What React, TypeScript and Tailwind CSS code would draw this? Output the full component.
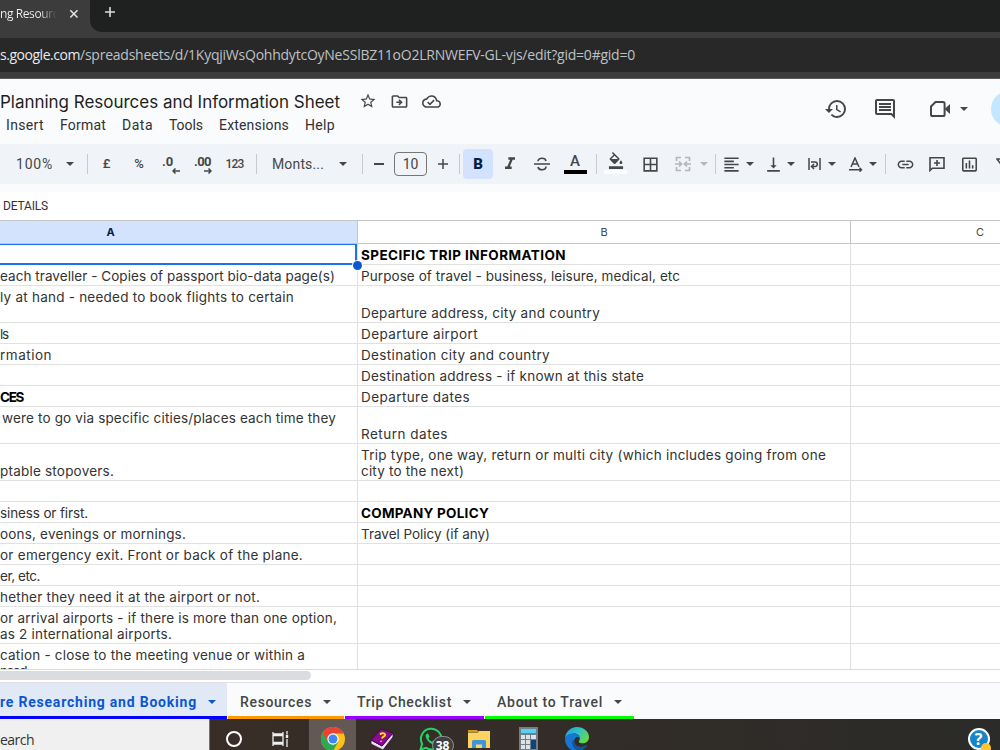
import { useLayoutEffect, useRef, type ReactNode } from "react";
import {
  MdBorderAll,
  MdFormatAlignLeft,
  MdFormatColorFill,
  MdFormatItalic,
  MdHistory,
  MdInsertChartOutlined,
  MdLink,
  MdOutlineCloudDone,
  MdOutlineDriveFileMove,
  MdOutlineInsertComment,
  MdStarBorder,
  MdVerticalAlignBottom,
} from "react-icons/md";
import clsx from "clsx";

interface FitProps {
  w: number;
  className?: string;
  children: ReactNode;
}

// Tracks the text out (or in) until it is exactly w pixels wide
function Fit({ w, className, children }: FitProps) {
  const ref = useRef<HTMLSpanElement>(null);

  useLayoutEffect(() => {
    const el = ref.current;
    if (!el) return;
    el.style.letterSpacing = "0px";
    const natural = el.getBoundingClientRect().width;
    const count = el.textContent?.length ?? 1;
    el.style.letterSpacing = `${(w - natural) / count}px`;
  }, [w]);

  return (
    <span ref={ref} className={clsx("inline-block shrink-0 whitespace-pre", className)}>
      {children}
    </span>
  );
}

function Slot({ className, children }: { className: string; children?: ReactNode }) {
  return <div className={clsx("flex shrink-0 items-center justify-center", className)}>{children}</div>;
}

function Caret({ className = "text-[#444746]" }: { className?: string }) {
  return (
    <svg className={clsx("h-1 w-2 shrink-0", className)} viewBox="0 0 8 4" fill="currentColor">
      <path d="M0 0h8L4 4z" />
    </svg>
  );
}

function Divider() {
  return <div className="h-5 w-px shrink-0 bg-[#c7cbd0]" />;
}

// ---- Browser chrome ----

function TabStrip() {
  return (
    <div className="flex h-8 bg-[#1f2120] font-['Open_Sans',sans-serif] text-[#dfe1e5]">
      <div className="-mt-2 flex h-10 w-[90px] shrink-0 items-center rounded-tr-lg bg-[#3c3c3c] pt-1">
        <div className="w-[57px] overflow-hidden bg-linear-to-r from-[#f1f3f4] from-70% to-[#3c3c3c] bg-clip-text text-xs text-transparent">
          <Fit w={58}>ng Resourc</Fit>
        </div>
        <svg className="ml-3 size-2.5" viewBox="0 0 10 10" stroke="#e0e0e0" strokeWidth="1.6">
          <path d="M1.3 1.3l7.2 7.2M8.5 1.3L1.3 8.5" />
        </svg>
      </div>
      <div className="size-3 self-end bg-[#3c3c3c]">
        <div className="size-3 rounded-bl-xl bg-[#1f2120]" />
      </div>
      <svg className="mt-1.5 ml-[2px] size-3" viewBox="0 0 12 12" stroke="#dcdcdc" strokeWidth="1.6">
        <path d="M6 1v10M1 6h10" />
      </svg>
    </div>
  );
}

function AddressBar() {
  return (
    <div className="h-[47px] border-b border-[#5a5a5a] bg-[#3c3c3c] pt-1.5">
      <div className="flex h-[34px] items-center bg-[#282828] pb-0.5 font-['Open_Sans',sans-serif] text-[14px] text-[#bdc1c6]">
        <Fit w={80} className="text-[#e8eaed]">s.google.com</Fit>
        <Fit w={555}>/spreadsheets/d/1KyqjiWsQohhdytcOyNeSSlBZ11oO2LRNWEFV-GL-vjs/edit?gid=0#gid=0</Fit>
      </div>
    </div>
  );
}

// ---- Document header ----

const MENUS = [
  { label: "Insert", w: 38 },
  { label: "Format", w: 46 },
  { label: "Data", w: 31 },
  { label: "Tools", w: 34 },
  { label: "Extensions", w: 70 },
  { label: "Help", w: 30 },
];

function DocHeader() {
  return (
    <header className="flex h-[65px] justify-between bg-[#f9fbfd] text-[#444746]">
      <div>
        <div className="mt-3 flex h-[22px] items-center pt-px">
          <Fit w={340} className="font-[Inter,sans-serif] text-[17px] text-[#1f1f1f]">
            Planning Resources and Information Sheet
          </Fit>
          <MdStarBorder className="mb-[3px] ml-[19px] size-[18px]" />
          <MdOutlineDriveFileMove className="mb-[3px] ml-[13px] size-[19px]" />
          <MdOutlineCloudDone className="mb-[3px] ml-[13px] size-[19px]" />
        </div>
        <nav className="mt-0.5 flex gap-4 pl-1.5 font-[Roboto,sans-serif] text-[14px] leading-5 text-[#303134]">
          {MENUS.map((m) => (
            <Fit key={m.label} w={m.w}>
              {m.label}
            </Fit>
          ))}
        </nav>
      </div>
      <div className="flex w-[176px] shrink-0 items-center overflow-hidden pb-1.5">
        <MdHistory className="size-6 shrink-0" />
        <MdOutlineInsertComment className="ml-[25px] size-6 shrink-0" />
        <svg className="ml-[32px] h-[18px] w-[22px] shrink-0" viewBox="0 0 22 18" fill="none" stroke="#444746" strokeWidth="2">
          <path d="M6.5 2H14a1.6 1.6 0 0 1 1.6 1.6v10.8A1.6 1.6 0 0 1 14 16H3.6A1.6 1.6 0 0 1 2 14.4V6.5z" />
          <path d="M15.6 9L21 4v10z" fill="#444746" stroke="none" />
        </svg>
        <Slot className="ml-[9px] w-2">
          <Caret />
        </Slot>
        <div className="ml-[23px] size-9 shrink-0 rounded-full bg-[#c2e7ff]" />
      </div>
    </header>
  );
}

// ---- Toolbar ----

function DecimalIcon({ label, increase }: { label: string; increase?: boolean }) {
  return (
    <div className="relative flex h-6 w-[18px]">
      <Fit w={increase ? 17 : 11} className="text-[13px] leading-5 font-bold">{label}</Fit>
      <svg className="absolute right-0 bottom-[2px] h-[6px] w-2" viewBox="0 0 8 6" fill="none" stroke="currentColor" strokeWidth="1.5">
        {increase ? <path d="M0 3h7M4.5 .5L7 3 4.5 5.5" /> : <path d="M8 3H1M3.5 .5L1 3l2.5 2.5" />}
      </svg>
    </div>
  );
}

function Toolbar() {
  return (
    <div className="h-12 bg-[#f9fbfd] pb-2">
      <div className="flex h-10 items-center overflow-hidden bg-[#f0f4f9] font-[Roboto,sans-serif] text-[14px] text-[#444746]">
        <Fit w={37} className="ml-4 pt-px">100%</Fit>
        <Slot className="w-[34px]"><Caret /></Slot>
        <Divider />
        <Slot className="w-[37px] text-[13px] font-medium">£</Slot>
        <Slot className="w-[28px] text-[13px] font-medium">%</Slot>
        <Slot className="w-9"><DecimalIcon label=".0" /></Slot>
        <Slot className="w-7"><DecimalIcon label=".00" increase /></Slot>
        <Slot className="mr-1 w-[35px]">
          <Fit w={18} className="text-[12px] font-medium">123</Fit>
        </Slot>
        <Divider />
        <Fit w={52} className="ml-[15px]">Monts...</Fit>
        <Slot className="w-[38px]"><Caret /></Slot>
        <Divider />
        <Slot className="w-[31px]"><div className="h-[1.5px] w-2.5 bg-[#444746]" /></Slot>
        <div className="flex h-6 w-[33px] shrink-0 items-center justify-center rounded border border-[#747775]">10</div>
        <Slot className="w-8">
          <svg className="size-2.5" viewBox="0 0 10 10" stroke="currentColor" strokeWidth="1.5">
            <path d="M5 0v10M0 5h10" />
          </svg>
        </Slot>
        <Divider />
        <Slot className="mx-[3px] h-[30px] w-[30px] rounded bg-[#d3e3fd] pt-px text-[15px] font-black text-[#041e49]">B</Slot>
        <Slot className="-ml-[3px] w-[33px]"><MdFormatItalic className="size-5" /></Slot>
        <Slot className="w-8">
          <svg className="size-4" viewBox="0 0 16 16" fill="none" stroke="currentColor" strokeWidth="1.6">
            <path d="M0 8h16M4 5.3C4 3.5 5.7 2.3 8 2.3s3.7 1 4 2.7M4 11c.3 1.7 1.7 2.7 4 2.7s4-1.2 4-3.2" />
          </svg>
        </Slot>
        <Slot className="mr-1 w-[34px] flex-col">
          <span className="text-[15px] leading-[15px] font-medium">A</span>
          <div className="mt-px h-1 w-[23px] bg-black" />
        </Slot>
        <Divider />
        <Slot className="w-[37px] flex-col">
          <MdFormatColorFill className="-mt-0.5 h-[17px] w-[18px]" />
          <div className="mt-px h-1 w-[23px] bg-white" />
        </Slot>
        <Slot className="w-8"><MdBorderAll className="size-[19px]" /></Slot>
        <Slot className="w-[34px] text-[#b4b7ba]">
          <svg className="size-4" viewBox="0 0 16 16" fill="none" stroke="currentColor" strokeWidth="1.7">
            <path d="M6 1.5H1.5V5M10 1.5h4.5V5M6 14.500H1.5V11M10 14.500h4.5V11M0 8h6M16 8h-6M4 5.5L6.5 8 4 10.5M12 5.5L9.5 8l2.5 2.5" />
          </svg>
        </Slot>
        <Slot className="mr-[7px] w-2"><Caret className="text-[#b4b7ba]" /></Slot>
        <Divider />
        <Slot className="w-[30px] pl-px"><MdFormatAlignLeft className="size-[19px]" /></Slot>
        <Slot className="mr-[5px] w-2"><Caret /></Slot>
        <Slot className="w-7"><MdVerticalAlignBottom className="size-[19px]" /></Slot>
        <Slot className="mr-[5px] w-2"><Caret /></Slot>
        <Slot className="w-7">
          <svg className="h-[14px] w-[13px]" viewBox="0 0 13 14" fill="none" stroke="currentColor" strokeWidth="1.5">
            <path d="M1 1v12M12 1v12M3 5h4a2.300 2.300 0 0 1 0 4.600H4M6 7L3.5 9.600 6 12" />
          </svg>
        </Slot>
        <Slot className="mr-[5px] w-2"><Caret /></Slot>
        <Slot className="w-7 pl-px">
          <svg className="h-[15px] w-[14px]" viewBox="0 0 14 15" fill="none" stroke="currentColor" strokeWidth="1.5">
            <path d="M2 10L6 1l4 9M3.5 7h5M0 12.700h12M10.500 10.700l2 2-2 2" />
          </svg>
        </Slot>
        <Slot className="mr-2 w-2"><Caret /></Slot>
        <Divider />
        <Slot className="ml-[3px] w-8"><MdLink className="size-[19px]" /></Slot>
        <Slot className="w-8">
          <svg className="size-4" viewBox="0 0 16 16" fill="none" stroke="currentColor" strokeWidth="1.6">
            <path d="M1 14.500V1.800h14v10.400H3.300zM8 4v6M5 7h6" />
          </svg>
        </Slot>
        <Slot className="w-8"><MdInsertChartOutlined className="size-[19px]" /></Slot>
        <svg className="ml-[11px] size-3.5 shrink-0" viewBox="0 0 14 14" fill="none" stroke="currentColor" strokeWidth="1.6">
          <path d="M1 2h12L8.500 8v4h-3V8z" />
        </svg>
      </div>
    </div>
  );
}

// ---- Grid ----

type Line = { t: string; w: number; bold?: boolean } | null;

interface Row {
  tall?: boolean;
  a?: Line[];
  b?: Line[];
}

const ROWS: Row[] = [
  { b: [{ t: "SPECIFIC TRIP INFORMATION", w: 205, bold: true }] },
  {
    a: [{ t: "each traveller - Copies of passport bio-data page(s)", w: 335 }],
    b: [{ t: "Purpose of travel - business, leisure, medical, etc", w: 319 }],
  },
  {
    tall: true,
    a: [{ t: "ly at hand - needed to book flights to certain", w: 294 }, null],
    b: [{ t: "Departure address, city and country", w: 239 }],
  },
  { a: [{ t: "ls", w: 8 }], b: [{ t: "Departure airport", w: 117 }] },
  { a: [{ t: "rmation", w: 52 }], b: [{ t: "Destination city and country", w: 189 }] },
  { b: [{ t: "Destination address - if known at this state", w: 283 }] },
  { a: [{ t: "CES", w: 23, bold: true }], b: [{ t: "Departure dates", w: 109 }] },
  {
    tall: true,
    a: [{ t: "were to go via specific cities/places each time they", w: 334 }, null],
    b: [{ t: "Return dates", w: 87 }],
  },
  {
    tall: true,
    a: [{ t: "ptable stopovers.", w: 114 }],
    b: [
      { t: "Trip type, one way, return or multi city (which includes going from one", w: 465 },
      { t: "city to the next)", w: 103 },
    ],
  },
  {},
  { a: [{ t: "siness or first.", w: 88 }], b: [{ t: "COMPANY POLICY", w: 128, bold: true }] },
  { a: [{ t: "oons, evenings or mornings.", w: 186 }], b: [{ t: "Travel Policy (if any)", w: 129 }] },
  { a: [{ t: "or emergency exit. Front or back of the plane.", w: 303 }] },
  { a: [{ t: "er, etc.", w: 40 }] },
  { a: [{ t: "hether they need it at the airport or not.", w: 260 }] },
  {
    tall: true,
    a: [
      { t: "or arrival airports - if there is more than one option,", w: 337 },
      { t: "as 2 international airports.", w: 172 },
    ],
  },
  {
    tall: true,
    a: [
      { t: "cation - close to the meeting venue or within a", w: 305 },
      { t: "need", w: 26 },
    ],
  },
];

function Cell({ lines = [], className }: { lines?: Line[]; className: string }) {
  return (
    <div className={clsx("flex shrink-0 flex-col justify-end overflow-hidden border-b border-[#e1e1e1] pb-px", className)}>
      {lines.map((line, i) => (
        <div key={i} className="h-4 text-[13.5px] leading-4 text-[#333]">
          {line && (
            <Fit w={line.w} className={line.bold ? "font-bold text-black" : ""}>
              {line.t}
            </Fit>
          )}
        </div>
      ))}
    </div>
  );
}

function Grid() {
  return (
    <main className="relative h-[450px] overflow-hidden border-b border-[#d9dbde] bg-white font-[Inter,sans-serif]">
      <div className="flex h-6 border-y border-[#c4c7c5] text-[11px] text-[#444746]">
        <div className="flex w-[358px] shrink-0 items-center justify-center border-r border-[#c4c7c5] bg-[#d3e3fd] pr-[136px] font-bold text-[#041e49]">
          A
        </div>
        <div className="flex w-[493px] shrink-0 items-center justify-center border-r border-[#c4c7c5]">B</div>
        <div className="flex items-center pl-[125px]">C</div>
      </div>
      {ROWS.map((row, i) => (
        <div key={i} className={clsx("flex", row.tall ? "h-[37px]" : "h-[21px]")}>
          <Cell lines={row.a} className={clsx("w-[358px] border-r", i === 7 && "pl-0.5")} />
          <Cell lines={row.b} className="w-[493px] border-r pl-[3px]" />
          <Cell className="w-[149px]" />
        </div>
      ))}
      {/* Selected cell outline with its fill handle */}
      <div className="absolute top-6 left-0 h-[21px] w-[357px] border-t border-r-2 border-b-2 border-[#1a73e8]" />
      <div className="absolute top-[41px] left-[353px] size-[9px] rounded-full bg-[#0b57d0] ring-1 ring-white" />
    </main>
  );
}

function SheetTabs() {
  const tabs = [
    { label: "Resources", w: 72, box: "w-[116px]", bar: "bg-[#ff9900]" },
    { label: "Trip Checklist", w: 95, box: "w-[139px]", bar: "bg-[#9900ff]" },
    { label: "About to Travel", w: 106, box: "w-[149px]", bar: "bg-[#00ff00]" },
  ];

  return (
    <div className="flex h-[37px] gap-px border-t border-[#dfe1e5] bg-[#f9fbfd] font-[Roboto,sans-serif] text-[14px] font-medium">
      <div className="flex w-[227px] flex-col bg-[#e1e9f7] text-[#0b57d0]">
        <div className="flex flex-1 items-center pt-1.5">
          <Fit w={197} className="font-bold">re Researching and Booking</Fit>
          <Slot className="ml-[11px] w-2 pb-0.5"><Caret className="text-[#0b57d0]" /></Slot>
        </div>
        <div className="h-[3px] bg-[#0000ff]" />
      </div>
      {tabs.map((tab) => (
        <div key={tab.label} className={clsx("flex flex-col text-[#444746]", tab.box)}>
          <div className="flex flex-1 items-center pt-1.5 pl-3">
            <Fit w={tab.w}>{tab.label}</Fit>
            <Slot className="ml-[11px] w-2 pb-0.5"><Caret /></Slot>
          </div>
          <div className={clsx("h-[3px]", tab.bar)} />
        </div>
      ))}
    </div>
  );
}

// ---- Taskbar ----

function ChromeIcon() {
  return (
    <svg className="size-6" viewBox="0 0 24 24">
      <circle cx="12" cy="12" r="12" fill="#fbc116" />
      <path d="M12 12L1.6 6A12 12 0 0 0 12 24l5.2-9z" fill="#2da94f" />
      <path d="M12 12V6.500h10.700A12 12 0 0 0 1.600 6L7 15z" fill="#e94335" />
      <circle cx="12" cy="12" r="5.7" fill="#fff" />
      <circle cx="12" cy="12" r="4.5" fill="#4285f4" />
    </svg>
  );
}

function BookIcon() {
  return (
    <svg className="h-[23px] w-6" viewBox="0 0 24 23">
      <path d="M1 12l11 6 11-13v4L13 22 1 16z" fill="#e8e4e8" stroke="#3c0a45" strokeWidth=".8" />
      <path d="M1 12L11 1l12 4-11 13z" fill="#8b0a91" stroke="#420248" strokeWidth=".8" />
      <path d="M10 6.500c2-2 5.800-1.200 5 .8-.6 1.500-2.700 1.400-3 3.200M11 12.800l.2 1" fill="none" stroke="#ffe600" strokeWidth="1.9" />
    </svg>
  );
}

function WhatsAppIcon() {
  return (
    <div className="relative">
      <svg className="size-6" viewBox="0 0 24 24">
        <path d="M1.500 22.500l1.600-5.700A10.300 10.300 0 1 1 7 20.900z" fill="none" stroke="#25d366" strokeWidth="2" />
        <path
          d="M8.500 6.500c-.6-.2-2 .8-1.800 2.700.4 3.500 4.300 7.600 7.500 8.100 1.900.2 3.300-1.200 3.100-2.200-.2-.8-2.400-1.800-3-1.600-.7.300-.9 1.300-1.600 1.100-1.400-.6-2.700-2-3.200-3.200 0-.7 1-.9 1-1.600 0-.8-1.100-3.100-2-3.300z"
          fill="#25d366"
        />
      </svg>
      <span className="absolute top-[9px] left-[13px] flex h-[19px] w-[22px] items-center justify-center rounded-full border border-[#929292] bg-[#3e4144] text-[12px] leading-3 font-bold text-white">
        38
      </span>
    </div>
  );
}

function FolderIcon() {
  return (
    <svg className="h-[18px] w-[22px]" viewBox="0 0 22 18">
      <path d="M0 0h9l2 2H0z" fill="#d99a13" />
      <path d="M0 2.500h10l1-1.500h11v17H0z" fill="#ffd35f" />
      <path d="M4 18v-6.500A1.500 1.500 0 0 1 5.500 10h11a1.500 1.500 0 0 1 1.500 1.500V18h-4v-3.500H8V18z" fill="#3f95da" />
    </svg>
  );
}

function CalculatorIcon() {
  return (
    <svg className="h-6 w-[19px]" viewBox="0 0 19 24">
      <path d="M0 0h19v24H0z" fill="#727f88" />
      <path d="M2 2h15v4H2z" fill="#55d2f2" />
      <path d="M2 8h4v4H2zM7 8h4v4H7zM12 8h5v4h-5zM2 13h4v4H2zM7 13h4v4H7zM2 18h4v4H2zM7 18h4v4H7z" fill="#dce2e5" />
      <path d="M12 13h5v9h-5z" fill="#0e4379" />
    </svg>
  );
}

function EdgeIcon() {
  return (
    <svg className="size-6" viewBox="0 0 24 24">
      <defs>
        <linearGradient id="edge-top" x1="0" y1="0" x2="1" y2=".5">
          <stop offset="0" stopColor="#1c9de2" />
          <stop offset=".55" stopColor="#2fc2c8" />
          <stop offset="1" stopColor="#62d84e" />
        </linearGradient>
      </defs>
      <path d="M0 12C0 5 5.500 0 12 0s12 4.500 12 10c0 4-3 6.300-6.200 6.300-2.800 0-4-1-4-1.900 0-.7 1-1 1-3C14.800 8 12 6.500 9 6.500 4 6.500 0 9.500 0 12z" fill="url(#edge-top)" />
      <path d="M0 12c.4-3.200 4-5.500 8.500-5.500 3.800 0 6.300 2.200 6.300 4.900-.8-1.400-2-1.700-3-1.400-3 1-4 6.600 0 9 3.600 2 7.800.8 10.500-1.200C20.300 21.500 16.500 24 12 24 5 24 0 18.500 0 12z" fill="#1877d2" />
      <path d="M8 12c-2.500 5 .5 10.500 6 11.800 4-.7 7-3 8.300-6-3 2.200-7 3.200-10.500 1.200-2.500-1.500-3.300-4.200-3.800-7z" fill="#12549f" />
    </svg>
  );
}

function HelpIcon() {
  return (
    <div className="relative">
      <div className="flex size-[22px] items-center justify-center rounded-full border-2 border-white bg-[#1685c9] text-[16px] font-bold text-white">
        ?
      </div>
      <div className="absolute right-[-1px] bottom-[-3px] size-2.5 rounded-full bg-[#ffc62b]" />
    </div>
  );
}

function Taskbar() {
  return (
    <footer className="flex h-[31px] items-start overflow-hidden bg-linear-to-r from-[#3c2e26] to-[#2b2b29] font-['Open_Sans',sans-serif]">
      <div className="flex h-[31px] w-[210px] shrink-0 items-center border-r border-[#77736f] bg-[#f0f0f0] pt-2.5 text-[14px] text-[#333]">
        <Fit w={34}>earch</Fit>
      </div>
      <Slot className="h-10 w-[47px]">
        <div className="size-4 rounded-full border-[2.5px] border-white" />
      </Slot>
      <Slot className="h-10 w-[51px] pr-1">
        <svg className="h-4 w-[17px]" viewBox="0 0 17 16" fill="none" stroke="#eee" strokeWidth="1.3">
          <path d="M1 1v2h10V1M1 4.500h10v7H1zM1 15v-2h10v2M15 0v3.500M15 8v8" />
          <path d="M13.800 4h2.400v3h-2.400z" fill="#eee" stroke="none" />
        </svg>
      </Slot>
      <Slot className="ml-px h-10 w-[47px] bg-[#625954]"><ChromeIcon /></Slot>
      <Slot className="h-10 w-[51px]"><BookIcon /></Slot>
      <Slot className="h-10 w-[47px]"><WhatsAppIcon /></Slot>
      <Slot className="h-10 w-[50px]"><FolderIcon /></Slot>
      <Slot className="h-10 w-[48px]"><CalculatorIcon /></Slot>
      <Slot className="h-10 w-[50px]"><EdgeIcon /></Slot>
      <Slot className="ml-auto h-10 w-[43px]"><HelpIcon /></Slot>
    </footer>
  );
}

export default function App() {
  return (
    <div className="h-[750px] w-[1000px] overflow-hidden bg-white">
      <TabStrip />
      <AddressBar />
      <DocHeader />
      <Toolbar />
      <div className="flex h-7 items-center bg-white pl-[3px] font-[Roboto,sans-serif] text-[12px] text-[#333]">
        <Fit w={45}>DETAILS</Fit>
      </div>
      <Grid />
      <div className="h-3 bg-white pt-px">
        <div className="h-[9px] w-[311px] rounded-r-full bg-[#dadce0]" />
      </div>
      <SheetTabs />
      <Taskbar />
    </div>
  );
}
